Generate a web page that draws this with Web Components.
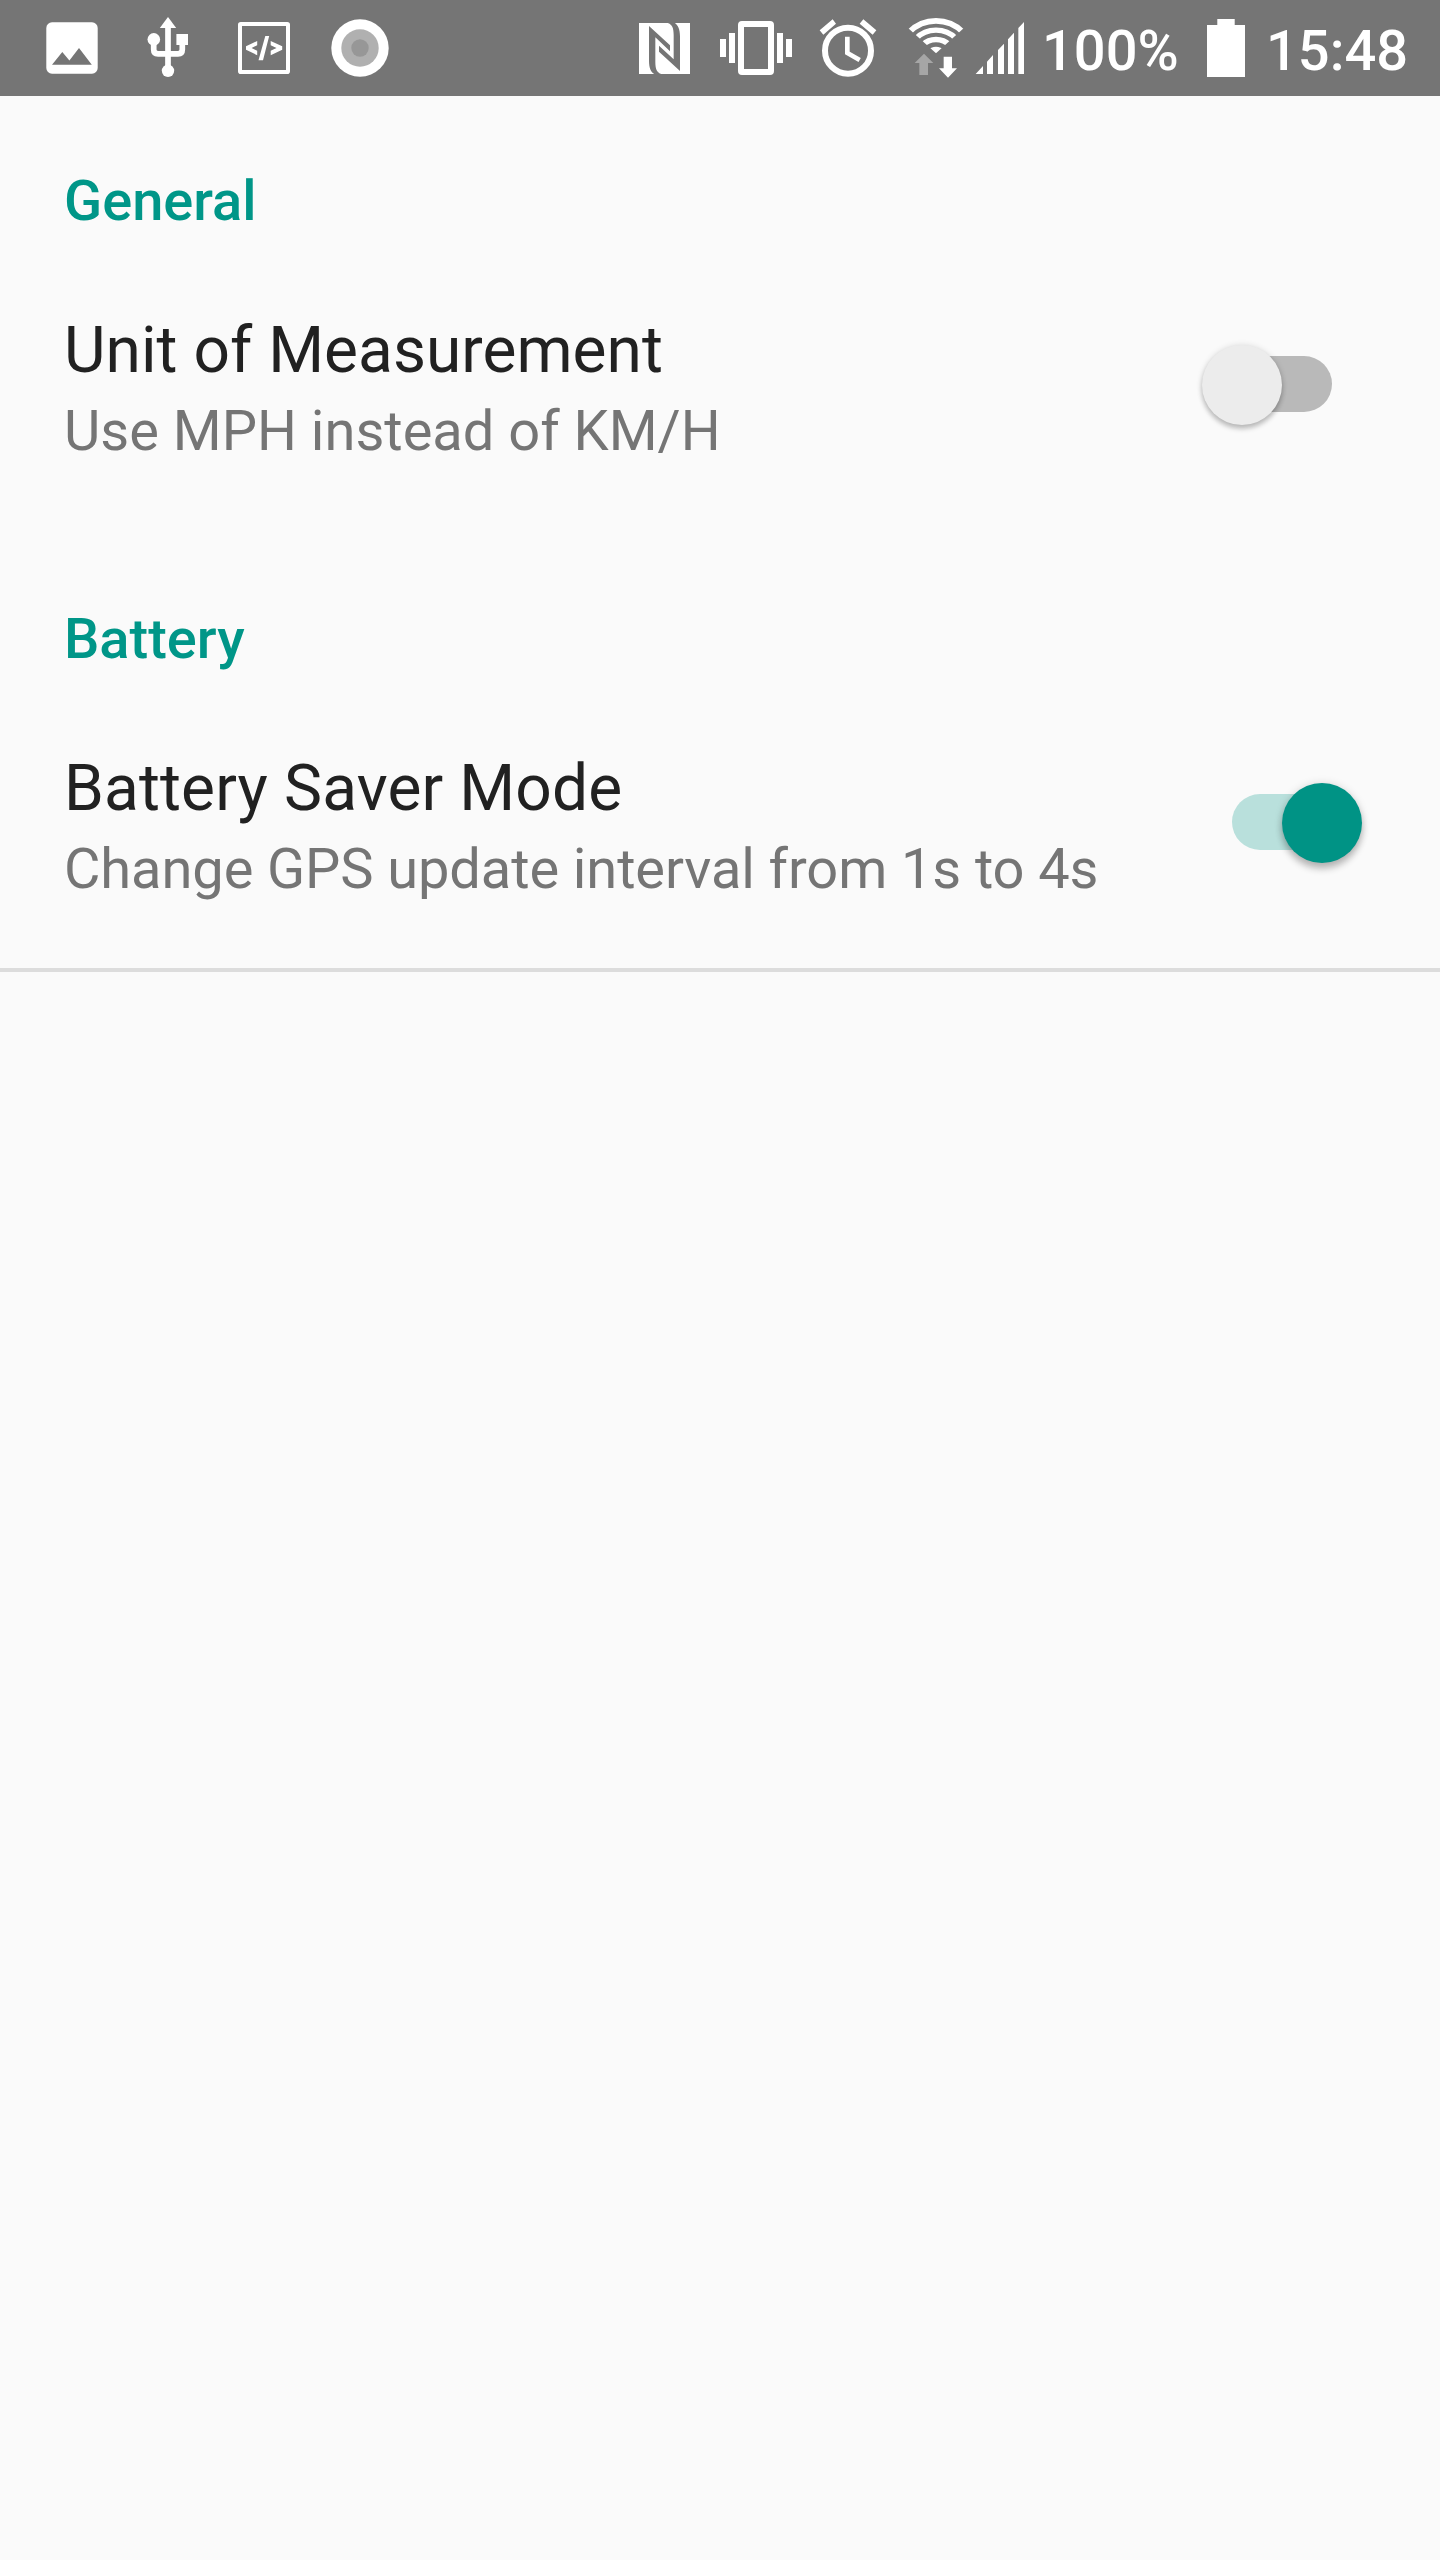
<!DOCTYPE html>
<html lang="en">
<head>
<meta charset="utf-8">
<title>Settings</title>
<style>
  html, body { margin: 0; padding: 0; background: #fafafa; }
  body { font-family: Roboto, "Liberation Sans", sans-serif; min-height: 2560px; }
</style>
</head>
<body>
<settings-screen></settings-screen>

<template id="status-bar">
  <style>
    :host { display: flex; align-items: center; justify-content: space-between; height: 96px; box-sizing: border-box; padding-left: 24px; background: #757575; color: #fff; }
    .group { display: flex; align-items: center; height: 96px; }
    svg { display: block; height: 96px; flex: none; }
    .txt { font-size: 56px; font-weight: 500; line-height: 66px; padding-top: 5px; white-space: nowrap; flex: none; }
    .pct { width: 153px; }
    .clock { width: 174px; }
  </style>
  <div class="group">
    <svg width="96" viewBox="0 0 96 96"><rect x="22.3" y="22.3" width="51.4" height="51.4" rx="5.7" fill="#fff"/><path fill="#757575" d="M28 64.8L38.3 52L45.4 60.6L55 48L67.8 64.8Z"/></svg>
    <svg width="96" viewBox="0 0 96 96" fill="#fff"><path d="M48 17L56.2 28H39.8Z"/><circle cx="48" cy="70.8" r="6.2"/><circle cx="33.8" cy="39.4" r="6.3"/><path d="M56.4 34H68V45H56.4Z"/><path d="M48 27V70M33.7 40V49.5Q33.7 53.8 38 53.8H58Q62.3 53.8 62.3 49.5V42" fill="none" stroke="#fff" stroke-width="5.7"/></svg>
    <svg width="96" viewBox="0 0 96 96"><rect x="24" y="24" width="48" height="48" rx=".8" fill="none" stroke="#fff" stroke-width="4"/><path fill="#fff" d="M49.3 36H53.2L47 60.2H42.5ZM41.2 41V45.2L35.6 48L41.2 50.8V55.2L30 49.8V46.2ZM54.7 41V45.2L60.5 48L54.7 50.8V55.2L66.2 49.8V46.2Z"/></svg>
    <svg width="96" viewBox="0 0 96 96"><circle cx="48" cy="48" r="28.7" fill="#fff"/><circle cx="48" cy="48" r="18.7" fill="#b0b0b0"/><circle cx="48" cy="48" r="8.7" fill="#979797"/></svg>
  </div>
  <div class="group">
    <svg width="80" viewBox="30 0 240 288"><path fill="#fff" d="M57 69H210V222H57Z"/><path fill="#757575" d="M87 78L150 136V154L106 112V186C106 208 111 218 124 222H103C93 216 87 204 87 182ZM180 213L117 155V137L161 178V105C161 83 156 73 143 69H164C174 75 180 87 180 109Z"/></svg>
    <svg width="90" viewBox="270 0 270 288" fill="#fff"><path fill-rule="evenodd" d="M366 63H450Q462 63 462 75V213Q462 225 450 225H366Q354 225 354 213V75Q354 63 366 63ZM372 81V207H444V81ZM300 117H318V171H300ZM327 99H345V189H327ZM471 99H489V189H471ZM498 117H516V171H498Z"/></svg>
    <svg width="100" viewBox="0 0 300 288"><circle cx="144" cy="152" r="69" fill="none" stroke="#fff" stroke-width="18"/><path d="M142 110V159L179 180" fill="none" stroke="#fff" stroke-width="14"/><path fill="#fff" d="M59 91L98 58L108 71L70 104ZM190 58L229 91L218 104L179 71Z"/></svg>
    <svg width="70" viewBox="300 0 210 288"><defs><clipPath id="w"><path d="M408 160L282 46V0H534V46Z"/></clipPath></defs><g clip-path="url(#w)" fill="none" stroke="#fff"><circle cx="408" cy="176" r="113.5" stroke-width="17"/><circle cx="408" cy="176" r="85.5" stroke-width="16"/><circle cx="408" cy="176" r="57.5" stroke-width="16"/><circle cx="408" cy="176" r="36" fill="#fff" stroke="none"/></g><path fill="#a6a6a6" d="M372 161L400 189H384V225H358V189H344Z"/><path fill="#fff" d="M431 170H456V205H471L444 233L417 205H431Z"/></svg>
    <svg width="72" viewBox="510 0 216 288" fill="#fff"><path d="M527 222L549 198V222ZM561 222V185L579 165V222ZM594 222V150L612 131V222ZM624 222V118L642 98V222ZM655 222V84L672 66V222Z"/></svg>
    <span class="txt pct">100%</span>
    <svg width="71" viewBox="0 0 71 96" fill="#fff"><path d="M22.3 19H39.7V25H50V77H12V25H22.3Z"/></svg>
    <span class="txt clock">15:48</span>
  </div>
</template>

<template id="pref-category">
  <style>
    :host { display: block; }
    h2 { margin: 0; padding: 72px 64px 0; font-size: 56px; line-height: 66px; font-weight: 500; color: #009688; }
    .rows { padding-top: 79px; padding-bottom: 73px; }
  </style>
  <h2></h2>
  <div class="rows"><slot></slot></div>
</template>

<template id="pref-row">
  <style>
    :host { display: flex; align-items: flex-start; justify-content: space-between; padding: 0 78px 0 64px; height: 144px; }
    .title { font-size: 64px; line-height: 76px; color: #212121; white-space: nowrap; letter-spacing: var(--title-tracking, 0); }
    .summary { padding-top: 9px; font-size: 56px; line-height: 66px; color: #757575; white-space: nowrap; letter-spacing: var(--summary-tracking, 0); }
    .widget { display: flex; align-items: center; height: 144px; }
  </style>
  <div><div class="title"></div><div class="summary"></div></div>
  <div class="widget"><slot></slot></div>
</template>

<template id="pref-switch">
  <style>
    :host { display: grid; width: 160px; height: 80px; align-items: center; flex: none; }
    .track, .thumb { grid-area: 1 / 1; }
    .track { width: 100px; height: 56px; margin: 0 0 2px 30px; border-radius: 28px; background: #b9b9b9; }
    .thumb { width: 80px; height: 80px; border-radius: 50%; background: #ececec; box-shadow: 0 4px 5px rgba(0,0,0,.22), 0 0 6px rgba(0,0,0,.12); }
    :host([checked]) .track { background: #b9e0dc; }
    :host([checked]) .thumb { justify-self: end; background: #009385; box-shadow: 0 6px 7px rgba(0,0,0,.24), 0 0 9px rgba(0,0,0,.13); }
  </style>
  <div class="track"></div><div class="thumb"></div>
</template>

<template id="settings-screen">
  <style>
    :host { display: block; width: 1440px; min-height: 2560px; background: #fafafa; }
    pref-category + pref-category { padding-top: 4px; }
    .unit { --title-tracking: .04px; }
    .saver { --title-tracking: .14px; --summary-tracking: -.1px; }
    hr { margin: 0; border: 0; height: 4px; background: #dcdcdc; }
  </style>
  <status-bar></status-bar>
  <pref-category label="General">
    <pref-row class="unit" label="Unit of Measurement" summary="Use MPH instead of KM/H"><pref-switch></pref-switch></pref-row>
  </pref-category>
  <pref-category label="Battery">
    <pref-row class="saver" label="Battery Saver Mode" summary="Change GPS update interval from 1s to 4s"><pref-switch checked></pref-switch></pref-row>
  </pref-category>
  <hr>
</template>

<script>
  class TemplateElement extends HTMLElement {
    constructor() {
      super();
      this.attachShadow({ mode: 'open' })
        .append(document.getElementById(this.localName).content.cloneNode(true));
    }
    fill(selector, attribute) {
      this.shadowRoot.querySelector(selector).textContent = this.getAttribute(attribute);
    }
  }
  customElements.define('status-bar', class extends TemplateElement {});
  customElements.define('pref-switch', class extends TemplateElement {});
  customElements.define('pref-row', class extends TemplateElement {
    connectedCallback() { this.fill('.title', 'label'); this.fill('.summary', 'summary'); }
  });
  customElements.define('pref-category', class extends TemplateElement {
    connectedCallback() { this.fill('h2', 'label'); }
  });
  customElements.define('settings-screen', class extends TemplateElement {});
</script>
</body>
</html>
</script>
